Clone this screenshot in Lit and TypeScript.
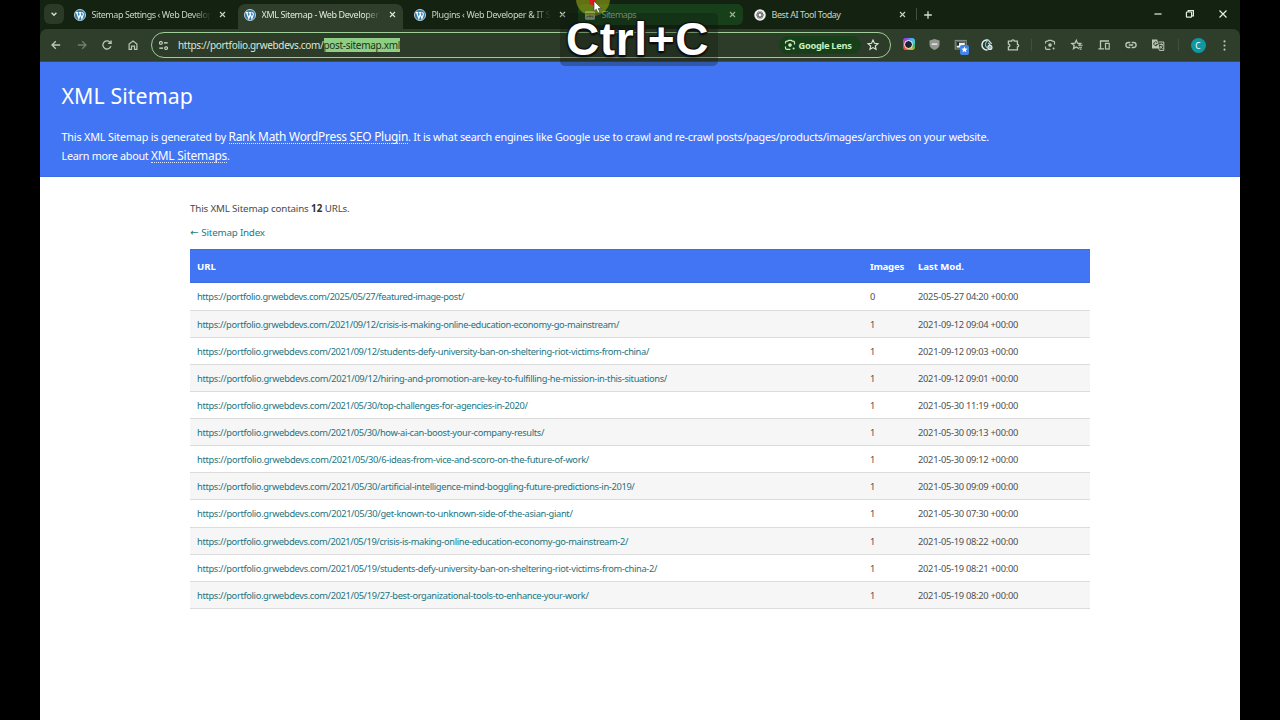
import { LitElement, html, css, svg } from "lit";
import { customElement, property } from "lit/decorators.js";

/** A single line of text tracked so that it spans `w` pixels. */
@customElement("fit-text")
class FitText extends LitElement {
  static styles = css`
    :host { display: inline-block; white-space: pre; flex: none; }
  `;
  @property() text = "";
  @property({ type: Number }) w = 0;
  render() { return html`${this.text}`; }
  updated() {
    this.style.letterSpacing = "0px";
    const natural = this.getBoundingClientRect().width;
    const spacing = (this.w - natural) / this.text.length;
    this.style.letterSpacing = `${spacing.toFixed(4)}px`;
  }
}

const fit = (text: string, w: number) => html`<fit-text .text=${text} .w=${w}></fit-text>`;

const icon = (body: unknown, size = 14) => html`
  <svg width=${size} height=${size} viewBox="0 0 14 14" fill="none" stroke="currentColor" stroke-width="1.2">${body}</svg>`;

const icons = {
  chevron: svg`<path d="M4.6 5.8 7 8.2 9.4 5.8" stroke-width="1.5"/>`,
  close: svg`<path d="M4.3 4.3l5.4 5.4M9.7 4.3L4.3 9.7" stroke-width="1.2"/>`,
  plus: svg`<path d="M7 3.2v7.6M3.2 7h7.6" stroke-width="1.3"/>`,
  back: svg`<path d="M11.2 7H3.2M6.8 3.2 3 7l3.8 3.8" stroke-width="1.3"/>`,
  forward: svg`<path d="M2.8 7h8M7.2 3.2 11 7l-3.8 3.8" stroke-width="1.3"/>`,
  reload: svg`<path d="M10.9 8.1A4.1 4.1 0 1 1 9.9 4.1L11 5.2M11.1 2.4v3H8.1" stroke-width="1.3"/>`,
  home: svg`<path d="M3.1 11.3V6L7 3l3.9 3v5.3H8.5V8.2h-3v3.1z" stroke-width="1.2"/>`,
  tune: svg`<circle cx="4.2" cy="4.2" r="1.5"/><path d="M7.5 4.2h4M2.5 9.8h4"/><circle cx="9.8" cy="9.8" r="1.5"/>`,
  lens: svg`<path d="M2.5 5.4V4.6Q2.5 3.2 3.9 3.2H4.8L5.6 2.3H8.4L9.2 3.2H10.1Q11.5 3.2 11.5 4.6V6.4M2.5 8.4v1.6q0 1.4 1.4 1.4H7.4" stroke-width="1.2"/><circle cx="7" cy="7.1" r="1.8" fill="currentColor" stroke="none"/><circle cx="10.6" cy="10.4" r="1" fill="currentColor" stroke="none"/>`,
  star: svg`<path d="M7 2.1l1.45 3.2 3.45.35-2.6 2.3.75 3.4L7 9.6l-3.05 1.75.75-3.4-2.6-2.3 3.45-.35z" stroke-width="1.15"/>`,
  starList: svg`<path d="M9 10.6 6.3 9 3.5 10.6l.7-3.1L1.8 5.5 5 5.2l1.3-2.9 1.2 2.9 3.2.3-1.9 1.7" stroke-width="1.3"/><path d="M8.2 7.3h4.4M9 9.2h3M9.6 11.1h2" stroke-width="1.1"/>`,
  puzzle: svg`<path d="M2.4 3.2h3.2a1.4 1.3 0 0 1 2.8 0h3v3.1a1.3 1.3 0 0 1 0 2.6v3H2.4V9a1.5 1.4 0 0 0 0-2.8z" stroke-width="1.3"/>`,
  devices: svg`<path d="M12 3H3.5v7.6M1.4 10.8H7" stroke-width="1.3"/><rect x="8.5" y="5.4" width="3.7" height="5.6" stroke-width="1.2"/>`,
  link: svg`<path d="M6.3 4.5H4.4a2.5 2.5 0 0 0 0 5h1.9M7.7 4.5h1.9a2.5 2.5 0 0 1 0 5H7.7M4.8 7h4.4" stroke-width="1.3"/>`,
  translate: svg`<path d="M1 1.6h5.2l2.6 9H1z" fill="currentColor" stroke="none"/><path d="M6.2 4.6a1.9 1.9 0 1 0 .3 1.8H4.8" stroke="#2f3d2b" stroke-width="1"/><path d="M7.4 4h5.4v8.4H8.4L7.6 10.4M8.4 6.4h3.6M10.3 5.4v1M9 10.4c1.4-.8 2.2-2.2 2.4-4M9 8l2.6 2.8" stroke-width="1"/>`,
  dots: svg`<g fill="currentColor" stroke="none"><circle cx="7" cy="2.6" r="1.15"/><circle cx="7" cy="7" r="1.15"/><circle cx="7" cy="11.4" r="1.15"/></g>`,
  minimize: svg`<path d="M3.4 7h7.2"/>`,
  restore: svg`<rect x="3.4" y="5" width="5.2" height="5.2" rx=".6"/><path d="M5.2 5V3.6h5.2v5.2H8.6"/>`,
  winClose: svg`<path d="M3.5 3.5l7 7M10.5 3.5l-7 7" stroke-width="1.2"/>`,
  wordpress: svg`<circle cx="7" cy="7" r="6.5" fill="#2f7fb0" stroke="#d5eaf5" stroke-width=".9"/><path d="M2 4.3h3M5.8 4.3h3M3.2 4.4l2.4 6.7L7.3 6M6.8 4.4l2.4 6.6 1.6-4.4c.5-1.5-.9-1.6-.6-2.8" stroke="#fff" stroke-width="1.4"/>`,
  sitemaps: svg`<rect x="1.2" y="2.6" width="11.6" height="9.8" rx="1.2" fill="#a3b397" stroke="none"/><path d="M2.2 5.2h9.6" stroke="#4c6a3c" stroke-width=".8"/><path d="M3.4 10.6v-2h7.2v2M7 6.4v4.2" stroke="#4c6343" stroke-width="1"/>`,
  openai: svg`<circle cx="7" cy="7" r="6.7" fill="#f1f3f0" stroke="none"/><g stroke="#4a514a" stroke-width=".75"><ellipse cx="7" cy="7" rx="4.2" ry="2.2"/><ellipse cx="7" cy="7" rx="4.2" ry="2.2" transform="rotate(60 7 7)"/><ellipse cx="7" cy="7" rx="4.2" ry="2.2" transform="rotate(120 7 7)"/></g>`,
  shield: svg`<path d="M7 1.2l5.4 1.6v3.8c0 3-2 5-5.4 6.4-3.4-1.4-5.4-3.4-5.4-6.4V2.8z" fill="#949993" stroke="none"/><path d="M4 6.6h6" stroke="#e6e8e5" stroke-width="1.6"/>`,
  note: svg`<rect x="1.2" y="2.4" width="11" height="8.6" stroke="#8d958b" stroke-width="1"/><rect x="2.6" y="3.6" width="8.2" height="6" fill="#f4f6f3" stroke="none"/><path d="M2.6 3.8h8v1H5v3H2.6z" fill="#1d2a2b" stroke="none"/>`,
  swirl: svg`<path d="M8.6 2.2A5 5 0 1 0 7.5 11.9" stroke="#dff3f6" stroke-width="1.5"/><path d="M8.4 2.2C4.8 4 4.6 8 7 9.8" stroke="#7cc4d8" stroke-width="1.1"/><path d="M8.6 2.4l3 3.4M8.2 4.8l2 2" stroke="#cfeef5"/><circle cx="9.9" cy="9.4" r="2.6" fill="#e3ece6" stroke="none"/><circle cx="9.9" cy="9.4" r="1" stroke="#667" stroke-width=".7"/>`,
};

const tabs = [
  { icon: icons.wordpress, title: "Sitemap Settings ‹ Web Develop", w: 121, state: "fade" },
  { icon: icons.wordpress, title: "XML Sitemap - Web Developer", w: 117, state: "active fade" },
  { icon: icons.wordpress, title: "Plugins ‹ Web Developer & IT Su", w: 124, state: "fade" },
  { icon: icons.sitemaps, title: "Sitemaps", w: 34.5, state: "hover" },
  { icon: icons.openai, title: "Best AI Tool Today", w: 69, state: "" },
];

const base = "https://portfolio.grwebdevs.com/";
const rows: [string, number, string, string][] = [
  ["2025/05/27/featured-image-post/", 267, "0", "2025-05-27 04:20 +00:00"],
  ["2021/09/12/crisis-is-making-online-education-economy-go-mainstream/", 422, "1", "2021-09-12 09:04 +00:00"],
  ["2021/09/12/students-defy-university-ban-on-sheltering-riot-victims-from-china/", 452, "1", "2021-09-12 09:03 +00:00"],
  ["2021/09/12/hiring-and-promotion-are-key-to-fulfilling-he-mission-in-this-situations/", 470, "1", "2021-09-12 09:01 +00:00"],
  ["2021/05/30/top-challenges-for-agencies-in-2020/", 330.5, "1", "2021-05-30 11:19 +00:00"],
  ["2021/05/30/how-ai-can-boost-your-company-results/", 347, "1", "2021-05-30 09:13 +00:00"],
  ["2021/05/30/6-ideas-from-vice-and-scoro-on-the-future-of-work/", 392, "1", "2021-05-30 09:12 +00:00"],
  ["2021/05/30/artificial-intelligence-mind-boggling-future-predictions-in-2019/", 437.5, "1", "2021-05-30 09:09 +00:00"],
  ["2021/05/30/get-known-to-unknown-side-of-the-asian-giant/", 375.5, "1", "2021-05-30 07:30 +00:00"],
  ["2021/05/19/crisis-is-making-online-education-economy-go-mainstream-2/", 431, "1", "2021-05-19 08:22 +00:00"],
  ["2021/05/19/students-defy-university-ban-on-sheltering-riot-victims-from-china-2/", 460, "1", "2021-05-19 08:21 +00:00"],
  ["2021/05/19/27-best-organizational-tools-to-enhance-your-work/", 391.5, "1", "2021-05-19 08:20 +00:00"],
];

@customElement("app-root")
class AppRoot extends LitElement {
  static styles = css`
    :host { display: block; position: relative; width: 1280px; height: 720px; overflow: hidden; background: #000;
      font-family: "Noto Sans", "Open Sans", sans-serif; }
    * { box-sizing: border-box; }
    svg { display: block; flex: none; }
    .screen { width: 1200px; height: 720px; margin: 0 auto; background: #fff; display: flex; flex-direction: column; }

    .strip { height: 29px; flex: none; background: #142311; display: flex; padding-left: 4px; color: #d3ddcd; }
    .search { width: 20px; height: 20px; margin: 4px 4px 0 0; border-radius: 6px; background: #2a3a27;
      display: flex; align-items: center; justify-content: center; }
    .tab { width: 165px; height: 21px; margin: 4px 5px 0 0; padding: 0 4px 0 6px; border-radius: 6px;
      display: flex; align-items: center; font-size: 9px; color: #c9d3c3; }
    .tab.active { height: 25px; padding-bottom: 4px; border-radius: 7px 7px 0 0; background: #2f3d2b; color: #dfe8da; }
    .tab.hover { background: #17401a; color: #9fb596; }
    .title { width: 121px; margin-left: 5.5px; overflow: hidden; white-space: nowrap; line-height: 14px; }
    .fade .title { -webkit-mask-image: linear-gradient(90deg, #000 84%, transparent 98%); mask-image: linear-gradient(90deg, #000 84%, transparent 98%); }
    .tab > svg:last-child { margin-left: auto; }
    .sep { width: 1px; height: 12px; background: #3f513b; flex: none; }
    .strip .sep { margin: 8px 4px 0 -2px; }
    .new { margin-top: 7.5px; }
    .win { display: flex; margin: 7px 10px 0 auto; gap: 18.6px; color: #e4ebe0; }

    .bar { height: 33px; flex: none; background: #142311; }
    .toolbar { height: 33px; background: #2f3d2b; border-radius: 7px 7px 0 0; border-bottom: 1px solid #31497f;
      display: flex; align-items: center; padding-left: 3.5px; color: #bcc8b5; }
    .slot { width: 25.5px; display: flex; justify-content: center; flex: none; position: relative; }
    .slot.dim { color: #71806c; }
    .omnibox { width: 740px; height: 26px; margin-left: 5.5px; border: 1.5px solid #9fcf98; border-radius: 13px;
      background: #2d3c29; display: flex; align-items: center; padding: 0 10px 0 5px; font-size: 10px; color: #dbe5d6; flex: none; }
    .url { display: flex; align-items: center; margin-left: 8px; line-height: 14px; }
    .sel { background: #8fcf85; color: #1d3319; height: 14px; }
    .pill { margin-left: auto; width: 82px; height: 18px; border-radius: 9px; background: #17401a; color: #c9efc0;
      display: flex; align-items: center; gap: 2px; padding-left: 3.5px; font-weight: 700; font-size: 9.3px; margin-right: 5px; }
    .ext { display: flex; margin-left: 4.5px; }
    .ext .slot { width: 26px; }
    .toolbar .gap { margin-left: 5.5px; }
    .tools { display: flex; margin: 0 6.5px 0 4.5px; }
    .tools .slot { width: 27px; }
    .ring { width: 12px; height: 12px; border-radius: 3px; display: flex; align-items: center; justify-content: center;
      background: conic-gradient(from 20deg, #4aa3ff, #3fd0d8, #39b56b, #f0b429, #ff6a2b, #ef3b3b, #d63aa8, #7d4dff, #4aa3ff); }
    .ring-in { width: 9px; height: 9px; border-radius: 50%; background: #1c222e; border: 1.5px solid #fff; }
    .badge { position: absolute; left: 12px; top: 7px; width: 9.5px; height: 9.5px; border-radius: 2px; background: #4484e8;
      color: #fff; display: flex; align-items: center; justify-content: center; }
    .avatar { width: 15px; height: 15px; border-radius: 50%; background: #0e98a4; color: #fff; font-size: 8.5px;
      line-height: 15px; text-align: center; margin: 0 12px 0 11.5px; flex: none; }

    .hero { height: 115px; flex: none; background: #4275f4; color: #fff; padding: 18px 21.5px 0; border-bottom: 1px solid #3e6de0; }
    .hero h1 { margin: 0; font-weight: 400; font-size: 21.3px; line-height: 32px; }
    .para { margin-top: 15px; font-size: 10.8px; }
    .line { display: flex; align-items: baseline; height: 19.3px; line-height: 19.3px; }
    .line a { font-size: 11.9px; line-height: 14px; border-bottom: 1px dotted #dbe6ff; margin-left: 2.5px; }

    .content { width: 900px; margin: 22px auto 0; color: #4a4a4a; }
    .count { display: flex; font-size: 9.8px; line-height: 20px; height: 20px; }
    .count b { color: #333; }
    .index { font-size: 9.8px; line-height: 20px; height: 20px; margin-top: 3.5px; color: #207a88; display: flex; }
    .arrow { font-family: "DejaVu Sans", sans-serif; width: 11.3px; }
    .table { margin-top: 6.3px; }
    .tr { display: grid; grid-template-columns: 673px 48px 1fr; height: 27.13px; align-items: center; padding: 2px 0 0 7px;
      font-size: 9.3px; line-height: 14px; border-bottom: 1px solid #dcdcdc; color: #505050; }
    .tr:nth-child(odd) { background: #f6f6f6; }
    .tr.th { height: 34.6px; padding-top: 1px; background: #4275f4; color: #fff; font-weight: 700; font-size: 9.6px; border-top: 1px solid #3e6de0; border-bottom: 1px solid #3e6de0; }
    .tr a { color: #1c7480; }

    .halo { position: absolute; left: 576px; top: -18px; width: 34px; height: 34px; border-radius: 50%; background: rgba(150, 165, 20, .6); }
    .keys { position: absolute; left: 560px; top: 13px; width: 158px; height: 53px; border-radius: 5px; background: rgba(15, 25, 15, .32);
      display: flex; padding-left: 6px; font: 700 46px/52px "Liberation Sans", Arial, sans-serif; color: #fff;
      text-shadow: 1px 1px 1px #111, -1px 1px 1px #111, 1px -1px 1px #111, -1px -1px 1px #111, 0 2px 2px #000; }
    .pointer { position: absolute; left: 586px; top: 0; }
  `;

  render() {
    return html`
      <div class="screen">
        <div class="strip">
          <div class="search">${icon(icons.chevron)}</div>
          ${tabs.map((t) => html`<div class="tab ${t.state}">
            ${icon(t.icon, 12)}<div class="title">${fit(t.title, t.w)}</div>${icon(icons.close, 13)}
          </div>`)}
          <div class="sep"></div>
          <div class="new">${icon(icons.plus)}</div>
          <div class="win">${icon(icons.minimize)}${icon(icons.restore)}${icon(icons.winClose)}</div>
        </div>
        <div class="bar">
        <div class="toolbar">
          <div class="slot">${icon(icons.back)}</div>
          <div class="slot dim">${icon(icons.forward)}</div>
          <div class="slot">${icon(icons.reload)}</div>
          <div class="slot">${icon(icons.home)}</div>
          <div class="omnibox">
            ${icon(icons.tune, 13)}
            <div class="url">${fit("https://portfolio.grwebdevs.com/", 145.5)}<span class="sel">${fit("post-sitemap.xml", 76.5)}</span></div>
            <div class="pill">${icon(icons.lens)}${fit("Google Lens", 53)}</div>
            ${icon(icons.star)}
          </div>
          <div class="ext">
            <div class="slot"><div class="ring"><div class="ring-in"></div></div></div>
            <div class="slot">${icon(icons.shield, 13)}</div>
            <div class="slot">${icon(icons.note)}<div class="badge">
              <svg width="7" height="7" viewBox="0 0 14 14" fill="#fff"><path d="M7 .8l1.8 4.1 4.4.4-3.4 3 1 4.4L7 10.4l-3.8 2.3 1-4.4-3.4-3 4.4-.4z"/></svg></div></div>
            <div class="slot">${icon(icons.swirl)}</div>
            <div class="slot">${icon(icons.puzzle)}</div>
          </div>
          <div class="sep gap"></div>
          <div class="tools">
            <div class="slot">${icon(icons.lens)}</div>
            <div class="slot">${icon(icons.starList)}</div>
            <div class="slot">${icon(icons.devices)}</div>
            <div class="slot">${icon(icons.link)}</div>
            <div class="slot">${icon(icons.translate)}</div>
          </div>
          <div class="sep"></div>
          <div class="avatar">C</div>
          ${icon(icons.dots, 13)}
        </div>
        </div>

        <div class="hero">
          <h1>${fit("XML Sitemap", 131.5)}</h1>
          <div class="para">
            <div class="line">${fit("This XML Sitemap is generated by", 164.5)}<a>${fit("Rank Math WordPress SEO Plugin", 179.5)}</a>${fit(". It is what search engines like Google use to crawl and re-crawl posts/pages/products/images/archives on your website.", 581)}</div>
            <div class="line">${fit("Learn more about", 87)}<a>${fit("XML Sitemaps", 76)}</a>.</div>
          </div>
        </div>

        <div class="content">
          <div class="count">${fit("This XML Sitemap contains ", 121)}<b>${fit("12", 11.5)}</b>${fit(" URLs.", 27)}</div>
          <div class="index"><span class="arrow">←</span>${fit("Sitemap Index", 63.5)}</div>
          <div class="table">
            <div class="tr th"><span>${fit("URL", 19)}</span><span>${fit("Images", 34)}</span><span>${fit("Last Mod.", 46)}</span></div>
            ${rows.map(([path, w, n, date]) => html`<div class="tr">
              <a>${fit(base + path, w)}</a><span>${n}</span><span>${fit(date, 100)}</span>
            </div>`)}
          </div>
        </div>
      </div>

      <div class="halo"></div>
      <svg class="pointer" width="18" height="16" viewBox="0 0 18 16">
        <circle cx="6.5" cy="1.5" r="3.5" fill="#d81e1e"/>
        <path d="M8 1v10.2l2.3-2 1.7 3.8 1.8-.8-1.6-3.7h3.1z" fill="#fff" stroke="#333" stroke-width=".6"/>
      </svg>
      <div class="keys">${fit("Ctrl+C", 143)}</div>
    `;
  }
}
